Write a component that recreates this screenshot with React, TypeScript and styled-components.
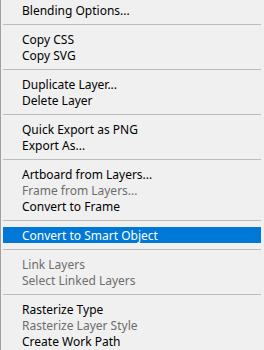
import { createGlobalStyle, styled } from 'styled-components';

type Entry = { label: string; disabled?: boolean; active?: boolean } | 'sep';

const entries: Entry[] = [
  { label: 'Blending Options...' },
  'sep',
  { label: 'Copy CSS' },
  { label: 'Copy SVG' },
  'sep',
  { label: 'Duplicate Layer...' },
  { label: 'Delete Layer' },
  'sep',
  { label: 'Quick Export as PNG' },
  { label: 'Export As...' },
  'sep',
  { label: 'Artboard from Layers...' },
  { label: 'Frame from Layers...', disabled: true },
  { label: 'Convert to Frame' },
  'sep',
  { label: 'Convert to Smart Object', active: true },
  'sep',
  { label: 'Link Layers', disabled: true },
  { label: 'Select Linked Layers', disabled: true },
  'sep',
  { label: 'Rasterize Type' },
  { label: 'Rasterize Layer Style', disabled: true },
  { label: 'Create Work Path' },
];

export default function App() {
  return (
    <>
      <GlobalStyle />
      <Menu>
        {entries.map((entry, i) =>
          entry === 'sep' ? (
            <Separator key={i} />
          ) : (
            <Item key={i} $disabled={entry.disabled} $active={entry.active}>
              {entry.label}
            </Item>
          ),
        )}
      </Menu>
    </>
  );
}

const GlobalStyle = createGlobalStyle`
  html, body {
    margin: 0;
    padding: 0;
    background: #f0f0f0;
  }
`;

const Menu = styled.div`
  width: 264px;
  height: 350px;
  box-sizing: border-box;
  overflow: hidden;
  padding: 2px 3px 0 2px;
  border-left: 1px solid #a0a0a0;
  background: #f0f0f0;
  font-family: 'Segoe UI', 'Noto Sans', sans-serif;
  font-size: 12px;
`;

const Item = styled.div<{ $disabled?: boolean; $active?: boolean }>`
  height: 16px;
  line-height: 18px;
  padding-left: 19px;
  white-space: nowrap;
  color: ${p => (p.$active ? '#ffffff' : p.$disabled ? '#6d6d6d' : '#000000')};
  background: ${p => (p.$active ? '#0078d7' : 'transparent')};
`;

const Separator = styled.div`
  height: 1px;
  margin: 6px 0;
  background: #bdbdbd;
`;
